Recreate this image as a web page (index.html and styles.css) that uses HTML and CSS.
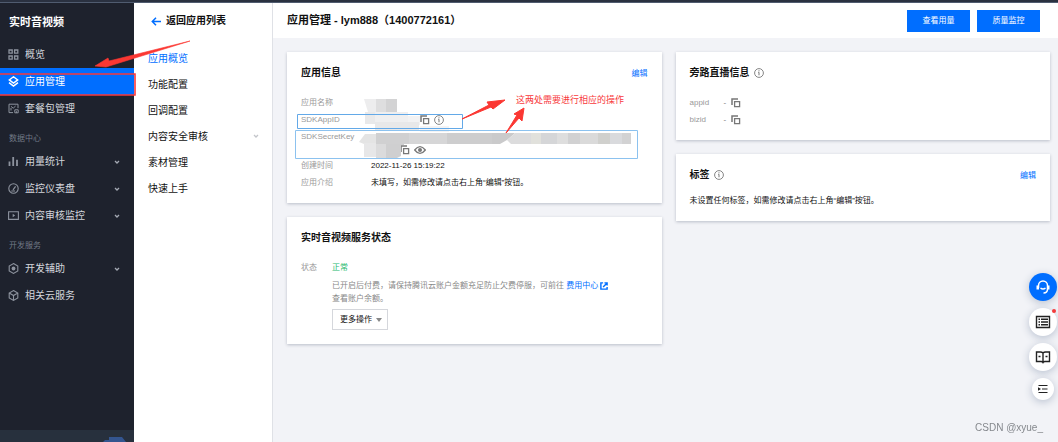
FILE: index.html
```html
<!DOCTYPE html>
<html lang="zh-CN">
<head>
<meta charset="utf-8">
<meta name="viewport" content="width=device-width, initial-scale=1">
<title>实时音视频 - 应用管理</title>
<link rel="stylesheet" href="styles.css">
</head>
<body>
<svg class="defs" aria-hidden="true">
  <symbol id="copy" viewBox="0 0 10 10"><path d="M1 7V1h6" fill="none" stroke="currentColor" stroke-width="1.5"/><path d="M3.6 3.6h5v5h-5z" fill="none" stroke="currentColor" stroke-width="1.3"/></symbol>
  <symbol id="info" viewBox="0 0 10 10"><circle cx="5" cy="5" r="4.4" fill="none" stroke="currentColor" stroke-width=".9"/><path d="M4.2 4.3H5v3M5 2.3v1" fill="none" stroke="currentColor"/></symbol>
  <symbol id="chevron" viewBox="0 0 6 4"><path d="M1 1l2 2 2-2" fill="none" stroke="currentColor" stroke-width="1.3"/></symbol>
</svg>
<div class="topbar"></div>
<div class="shell">
  <aside class="side">
    <h1 class="side-title">实时音视频</h1>
    <nav class="side-nav">
      <a class="side-item" href="#"><svg class="side-icon" viewBox="0 0 11 11"><path d="M1 1h3.2v3.2H1zM1 7h3.2v3.2H1zM6.6 7h3.2v3.2H6.6zM6.6 1h3.2v3.2H6.6z" fill="none" stroke="currentColor" stroke-width="1.3"/></svg>概览</a>
      <a class="side-item active" href="#"><svg class="side-icon" viewBox="0 0 11 11"><path d="M5.5.8l4.2 3.1-4.2 3.2-4.2-3.2zM1 6.6l4.5 3.5L10 6.6" fill="none" stroke="currentColor" stroke-width="1.4"/></svg>应用管理</a>
      <a class="side-item" href="#"><svg class="side-icon" viewBox="0 0 11 11"><path d="M5 9.6H1V1.2h9v4M3 3.4l2.2 1.8L7.6 3M3 5v2.5M6.8 6.8h3.4v3H6.8zM8.5 8.3v1.5" fill="none" stroke="currentColor"/></svg>套餐包管理</a>
      <h2 class="side-group">数据中心</h2>
      <a class="side-item" href="#"><svg class="side-icon" viewBox="0 0 11 11"><path d="M1.5 10V5.5M5.2 10V1M9 10V3.8" fill="none" stroke="currentColor" stroke-width="1.8"/></svg>用量统计<svg class="chev"><use href="#chevron"/></svg></a>
      <a class="side-item" href="#"><svg class="side-icon" viewBox="0 0 11 11"><circle cx="5.5" cy="5.5" r="4.7" fill="none" stroke="currentColor" stroke-width="1.1"/><path d="M5 6.8l2.6-3.4M3.3 8h3.8" fill="none" stroke="currentColor" stroke-width="1.2"/></svg>监控仪表盘<svg class="chev"><use href="#chevron"/></svg></a>
      <a class="side-item" href="#"><svg class="side-icon" viewBox="0 0 11 11"><path d="M.6 1.8h9.8v7.6H.6z" fill="none" stroke="currentColor" stroke-width="1.1"/><path d="M4.7 3.8l2.4 1.7-2.4 1.7z" fill="currentColor"/></svg>内容审核监控<svg class="chev"><use href="#chevron"/></svg></a>
      <h2 class="side-group">开发服务</h2>
      <a class="side-item" href="#"><svg class="side-icon" viewBox="0 0 11 11"><path d="M5.5.6l4.3 2.5v4.8l-4.3 2.5-4.3-2.5V3.1z" fill="none" stroke="currentColor" stroke-width="1.1"/><circle cx="5.5" cy="5.5" r="1.9" fill="currentColor"/></svg>开发辅助<svg class="chev"><use href="#chevron"/></svg></a>
      <a class="side-item" href="#"><svg class="side-icon" viewBox="0 0 11 11"><path d="M5.5.6l4.3 2.5v4.8l-4.3 2.5-4.3-2.5V3.1zM1.2 3.1l4.3 2.5 4.3-2.5M5.5 5.6v4.8" fill="none" stroke="currentColor" stroke-width="1.1"/></svg>相关云服务</a>
    </nav>
    <div class="side-foot"><svg viewBox="0 0 24 5"><path d="M1 5l2-2h4V0h13l4 5z" fill="#34558f"/></svg></div>
  </aside>
  <aside class="sub">
    <a class="back" href="#"><svg viewBox="0 0 10 9"><path d="M10 4.5H1.5M5 .8L1.3 4.5 5 8.2" fill="none" stroke="#006eff" stroke-width="1.5"/></svg>返回应用列表</a>
    <nav class="sub-nav">
      <a class="sub-item current" href="#">应用概览</a>
      <a class="sub-item" href="#">功能配置</a>
      <a class="sub-item" href="#">回调配置</a>
      <a class="sub-item" href="#">内容安全审核<svg class="chev"><use href="#chevron"/></svg></a>
      <a class="sub-item" href="#">素材管理</a>
      <a class="sub-item" href="#">快速上手</a>
    </nav>
  </aside>
  <main class="main">
    <header class="head">
      <h2 class="head-title">应用管理 - lym888（1400772161）</h2>
      <button class="primary" type="button">查看用量</button>
      <button class="primary" type="button">质量监控</button>
    </header>
    <div class="cards">
      <div class="column">
        <section class="card">
          <div class="card-head"><h3>应用信息</h3><a class="edit" href="#">编辑</a></div>
          <dl class="info">
            <div class="row"><dt>应用名称</dt><dd></dd></div>
            <div class="row"><dt>SDKAppID</dt><dd class="masked id"><svg class="ico"><use href="#copy"/></svg><svg class="ico"><use href="#info"/></svg></dd></div>
            <div class="row secret"><dt>SDKSecretKey</dt><dd class="masked key"><svg class="ico"><use href="#copy"/></svg><svg class="eye" viewBox="0 0 12 10"><path d="M.7 5Q6-1.8 11.3 5 6 11.8.7 5z" fill="none" stroke="currentColor" stroke-width="1.3"/><circle cx="6" cy="5" r="2" fill="currentColor"/></svg></dd></div>
            <div class="row"><dt>创建时间</dt><dd>2022-11-26 15:19:22</dd></div>
            <div class="row"><dt>应用介绍</dt><dd>未填写，如需修改请点击右上角“编辑”按钮。</dd></div>
          </dl>
          <svg class="marks" viewBox="0 0 374 151" aria-hidden="true">
            <path d="M77 47h12v13h-8z" fill="#ededee"/><path d="M89 47h10v13H89z" fill="#dededf"/><path d="M99 47h11v13H99z" fill="#d3d3d4"/>
            <path d="M78 60h22v12H78z" fill="#e9e9ea"/><path d="M88 60h33v10H88z" fill="#efeff0"/><path d="M121 64h12v9h-12z" fill="#f2f2f3"/><path d="M88 70h44v8H88z" fill="#e8e8e9"/><path d="M133 74h29v6h-29z" fill="#f4f4f5"/>
            <path d="M72 90l6-8h22v10H77z" fill="#e4e4e4"/><path d="M77 91h12v14H77z" fill="#e7e7e8"/><path d="M89 91h10v15H89z" fill="#dbdbdc"/><path d="M99 91h18v2h-3v11l-4 2H99z" fill="#cfcfd0"/>
            <path d="M89 81h33v11H89z" fill="#d0d0d1"/><path d="M122 81h38v11h-38z" fill="#d6d6d7"/><path d="M160 81h45v11h-45z" fill="#cdcdce"/><path d="M205 81h23l-8 7-7 4h-8z" fill="#cacacb"/><path d="M228 81h16v11h-20l-4-4z" fill="#dcdcdd"/><path d="M244 81h10v11h-10z" fill="#e1e1dc"/><path d="M254 81h16v11h-16z" fill="#d5d6d8"/><path d="M270 81h11v11h-11z" fill="#dedede"/><path d="M281 81h12v11h-12z" fill="#d1d1d2"/><path d="M293 81h18v11h-18z" fill="#dadada"/><path d="M311 81h12v11h-12z" fill="#d0d0cd"/><path d="M323 81h12v11h-12z" fill="#d9dadd"/><path d="M335 81h9v11h-9z" fill="#d2d2d3"/>
            <path d="M10.500 62.500h165v14h-165z" fill="none" stroke="#63a9e8"/><path d="M8.500 78.500h342v28h-342z" fill="none" stroke="#8cc2ef"/>
            <path d="M175 67l27-14-2-3 18-2-12 9-2-2z" fill="#fb3732" stroke="#fb3732"/><path d="M219 81l11-18-3-1 10-6-2 13-3-3z" fill="#fb3732" stroke="#fb3732"/>
          </svg>
          <p class="note">这两处需要进行相应的操作</p>
        </section>
        <section class="card">
          <div class="card-head"><h3>实时音视频服务状态</h3></div>
          <dl class="status">
            <dt>状态</dt>
            <dd><p class="ok">正常</p><p class="hint">已开启后付费，请保持腾讯云账户金额充足防止欠费停服，可前往 <a href="#">费用中心 <svg viewBox="0 0 9 9"><path d="M3.500 1H1v7h7V5.500M5 1h3v3M8 1L3.500 5.500" fill="none" stroke="currentColor" stroke-width="1.600"/></svg></a><br>查看账户余额。</p><button class="more" type="button">更多操作<span class="caret"></span></button></dd>
          </dl>
        </section>
      </div>
      <div class="column">
        <section class="card">
          <div class="card-head"><h3>旁路直播信息</h3><svg class="ico"><use href="#info"/></svg></div>
          <dl class="info short">
            <div class="row"><dt>appid</dt><dd>-<svg class="ico"><use href="#copy"/></svg></dd></div>
            <div class="row"><dt>bizid</dt><dd>-<svg class="ico"><use href="#copy"/></svg></dd></div>
          </dl>
        </section>
        <section class="card">
          <div class="card-head"><h3>标签</h3><svg class="ico"><use href="#info"/></svg><a class="edit" href="#">编辑</a></div>
          <p class="tags">未设置任何标签，如需修改请点击右上角“编辑”按钮。</p>
        </section>
      </div>
    </div>
  </main>
</div>
<svg class="nav-mark" viewBox="0 0 200 100" aria-hidden="true"><path d="M-2 74h137v21H-2z" fill="none" stroke="#f8393b" stroke-width="1.6"/><path d="M190 41L106 67l-11-1 13-8 1 3z" fill="#fb3732" stroke="#fb3732" stroke-width=".6"/></svg>
<div class="float">
  <button class="round blue" type="button" aria-label="客服"><svg viewBox="0 0 16 16"><path d="M3.500 9V6.500a4.500 4.500 0 0 1 9 0V10q0 4-4 4M5.500 9q2.500 2 5 0" fill="none" stroke="#fff" stroke-width="1.500"/><path d="M1.500 6.500h2.500v4H1.500zM12 6.500h2.500v4H12z" fill="#fff"/></svg></button>
  <button class="round dot" type="button" aria-label="公告"><svg viewBox="0 0 16 16"><path d="M1.500 2.500h13v11h-13zM3.500 5.300h1.500M6 5.300h7M3.500 8h1.500M6 8h7M3.500 10.700h1.500M6 10.700h7" fill="none" stroke="#222" stroke-width="1.400"/></svg></button>
  <button class="round" type="button" aria-label="文档"><svg viewBox="0 0 16 16"><path d="M8 4Q7 3 5.500 3h-4v9.500h4.500q1.500 0 2 1 .5-1 2-1h4.500V3h-4Q9 3 8 4zM8 4v10M3.500 7.500h2M10.500 7.500h2" fill="none" stroke="#222" stroke-width="1.400"/></svg></button>
  <button class="round small" type="button" aria-label="收起"><svg viewBox="0 0 12 12"><path d="M1.500 2.500h9M5 6h5.500M1.500 9.500h9" fill="none" stroke="#222" stroke-width="1.200"/><path d="M1 4.300L4 6 1 7.700z" fill="#222"/></svg></button>
</div>
<p class="watermark">CSDN @xyue_</p>
</body>
</html>
```
FILE: styles.css
```css
* { box-sizing: border-box; }
body {
  margin: 0;
  min-height: 100vh;
  display: flex;
  flex-direction: column;
  font: 8px/13px "Liberation Sans", "Noto Sans CJK SC", sans-serif;
  color: #111;
  background: #f2f3f7;
}
h1, h2, h3, p, dl, dd { margin: 0; }
a { color: inherit; text-decoration: none; }
button { font: inherit; border: 0; padding: 0; cursor: pointer; }
svg { flex: none; }
.defs { position: absolute; width: 0; height: 0; }
.topbar { height: 3px; background: #2a3140; border-bottom: 1px solid #505c70; }
.shell { flex: 1; display: flex; }

.side {
  width: 134px;
  flex: none;
  display: flex;
  flex-direction: column;
  background: #1e222d;
  color: #d3d6dc;
}
.side-title { padding: 11px 9px; font-size: 11px; line-height: 16px; color: #fff; }
.side-nav { flex: 1; }
.side-item {
  display: flex;
  align-items: center;
  height: 27px;
  padding: 0 14px 0 8px;
  gap: 6px;
  font-size: 10px;
}
.side-icon { width: 11px; height: 11px; color: #8d939e; }
.side-item.active, .active .side-icon { color: #fff; }
.side-item.active { background: #006eff; }
.chev { width: 6px; height: 4px; margin-left: auto; color: #a4a9b3; }
.side-group { height: 26px; padding: 10px 9px 0; font-size: 8px; font-weight: 400; color: #717986; }
.side-foot { height: 12px; padding: 7px 8px 0; background: #27303d; display: flex; justify-content: flex-end; }
.side-foot svg { width: 24px; height: 5px; }

.sub { width: 139px; flex: none; background: #fff; border-right: 1px solid #dfe1e6; }
.back {
  display: flex;
  align-items: center;
  gap: 5px;
  padding: 10px 17px 16px;
  font-size: 10px;
  line-height: 16px;
  font-weight: 700;
}
.back svg { width: 10px; height: 9px; }
.sub-item { display: flex; align-items: center; height: 26px; padding: 0 13px 0 14px; font-size: 10px; }
.current { color: #006eff; }
.sub .chev { color: #c3c5ca; }

.main { flex: 1; min-width: 0; }
.head {
  display: flex;
  align-items: center;
  gap: 7px;
  height: 35px;
  padding: 0 18px 0 14px;
  background: #fff;
}
.head-title { flex: 1; font-size: 11px; }
.primary { width: 63px; height: 22px; background: #006eff; color: #fff; }
.cards { display: grid; grid-template-columns: 1fr 1fr; gap: 14px; padding: 14px 8px 14px 14px; }
.column { display: flex; flex-direction: column; gap: 14px; min-width: 0; }
.card { position: relative; padding: 14px 14px 12px; background: #fff; box-shadow: 0 1px 3px #b9bdc8; }
.card-head { display: flex; align-items: center; gap: 4px; height: 14px; }
.card-head h3 { font-size: 10px; line-height: 14px; }
.card-head .ico { color: #777; }
.edit { margin-left: auto; color: #006eff; }
.info { padding-top: 14px; }
.row { display: flex; padding: 2px 0; }
.row dt { width: 70px; flex: none; color: #999; }
.row dd { display: flex; align-items: center; min-height: 13px; }
.ico { width: 10px; height: 10px; color: #777; }
.masked { gap: 4px; }
.id { padding-left: 49px; }
.secret { padding-bottom: 1px; }
.row .key { min-height: 26px; padding: 13px 0 0 29px; }
.eye { width: 12px; height: 10px; color: #777; }
.short dt { width: 34px; }
.short dd { gap: 5px; color: #777; }
.marks { position: absolute; left: 0; top: 0; width: 374px; height: 151px; pointer-events: none; }
.note { position: absolute; left: 229px; top: 42px; font-size: 9px; color: #f8393b; }
.status { display: flex; padding: 13px 0 2px; }
.status dt { width: 31px; flex: none; line-height: 19px; color: #999; }
.ok { line-height: 19px; color: #29b96f; }
.hint { padding-top: 2px; color: #888; }
.hint a { color: #006eff; }
.hint svg { width: 8px; height: 8px; vertical-align: middle; }
.more {
  display: flex;
  align-items: center;
  gap: 4px;
  height: 21px;
  margin-top: 4px;
  padding: 0 5px 0 7px;
  border: 1px solid #d5d7dc;
  background: #fff;
  color: #111;
}
.caret { border: 3px solid transparent; border-top: 4px solid #888; border-bottom: 0; }
.tags { padding: 12px 0 2px; }

.nav-mark { position: absolute; left: 0; top: 0; width: 200px; height: 100px; pointer-events: none; }
.float {
  position: fixed;
  right: 1px;
  bottom: 42px;
  display: flex;
  flex-direction: column;
  align-items: center;
  gap: 7px;
}
.round {
  position: relative;
  display: flex;
  align-items: center;
  justify-content: center;
  width: 28px;
  height: 28px;
  border-radius: 50%;
  background: #fff;
  box-shadow: 0 2px 8px #b8c0cf;
}
.round svg { width: 16px; height: 16px; }
.blue { background: #006eff; }
.small { width: 22px; height: 22px; }
.small svg { width: 12px; height: 12px; }
.dot::after {
  content: "";
  position: absolute;
  top: 1px;
  right: 1px;
  width: 4px;
  height: 4px;
  border-radius: 50%;
  background: #f33b3b;
}
.watermark { position: fixed; right: 15px; bottom: 8px; font-size: 10px; color: #85888d; }
```
